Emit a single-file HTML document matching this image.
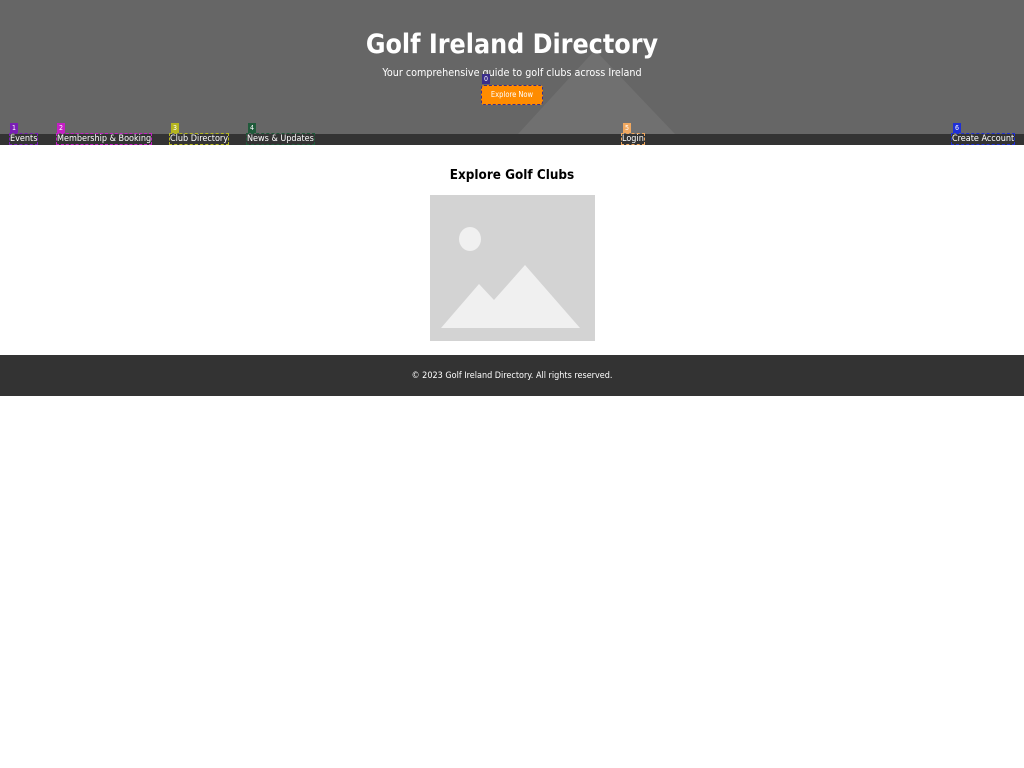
<!DOCTYPE html>
<html><head><meta charset="utf-8"><style>
*{margin:0;padding:0;box-sizing:border-box}
body{width:1024px;height:768px;background:#fff;font-family:"DejaVu Sans Condensed","DejaVu Sans","Liberation Sans",sans-serif;position:relative;overflow:hidden}
.hdr{position:absolute;left:0;top:0;width:1024px;height:134px;background:#666}
.abs{position:absolute}
h1{position:absolute;top:29px;width:1024px;text-align:center;color:#fff;font-size:26.6px;font-weight:bold}
.sub{position:absolute;top:66px;width:1024px;text-align:center;color:#fff;font-size:10.7px}
.btn{position:absolute;left:481px;top:85px;width:62px;height:20px;background:#ff8c00;border:1px dashed #3a2e8a;border-radius:3px;color:#fff;font-size:7.5px;text-align:center;line-height:18px}
.nav{position:absolute;left:0;top:134px;width:1024px;height:11px;background:#333}
.nl{position:absolute;top:133px;color:#fff;font-size:9px;line-height:11px;height:12px;border:1px dashed}
.tag{position:absolute;top:123px;height:10px;font-size:7px;color:#fff;line-height:10px;padding:0 2px}
h2{position:absolute;top:168px;width:1024px;text-align:center;font-size:13.4px;font-weight:bold;color:#000}
.ft{position:absolute;left:0;top:355px;width:1024px;height:41px;background:#333;color:#fff;font-size:9px;text-align:center;line-height:43px}
</style></head><body>
<div class="hdr"></div>
<svg class="abs" style="left:0;top:0" width="1024" height="134"><polygon points="518,134 595,50 675,134" fill="#707070"/></svg>
<h1>Golf Ireland Directory</h1>
<div class="sub">Your comprehensive guide to golf clubs across Ireland</div>
<div class="tag" style="left:482px;top:74px;background:#3a2e8a">0</div>
<div class="btn">Explore Now</div>
<div class="nav"></div>
<div class="tag" style="left:10px;background:#7a1fb5">1</div>
<div class="nl" style="left:9px;border-color:#7a1fb5">Events</div>
<div class="tag" style="left:57px;background:#c51fc5">2</div>
<div class="nl" style="left:56px;border-color:#c51fc5">Membership &amp; Booking</div>
<div class="tag" style="left:171px;background:#b5b51f">3</div>
<div class="nl" style="left:169px;border-color:#b5b51f">Club Directory</div>
<div class="tag" style="left:248px;background:#1f5a3a">4</div>
<div class="nl" style="left:246px;border-color:#1f5a3a">News &amp; Updates</div>
<div class="tag" style="left:623px;background:#f0a860">5</div>
<div class="nl" style="left:621px;border-color:#f0a860">Login</div>
<div class="tag" style="left:953px;background:#1f2fd5">6</div>
<div class="nl" style="left:951px;border-color:#1f2fd5">Create Account</div>
<h2>Explore Golf Clubs</h2>
<svg class="abs" style="left:430px;top:195px" width="165" height="146"><rect width="165" height="146" fill="#d3d3d3"/><ellipse cx="40" cy="44" rx="11" ry="12" fill="#f0f0f0"/><polygon points="11,133 49,89 64,105 95,70 150,133" fill="#f0f0f0"/></svg>
<div class="ft">© 2023 Golf Ireland Directory. All rights reserved.</div>
</body></html>
